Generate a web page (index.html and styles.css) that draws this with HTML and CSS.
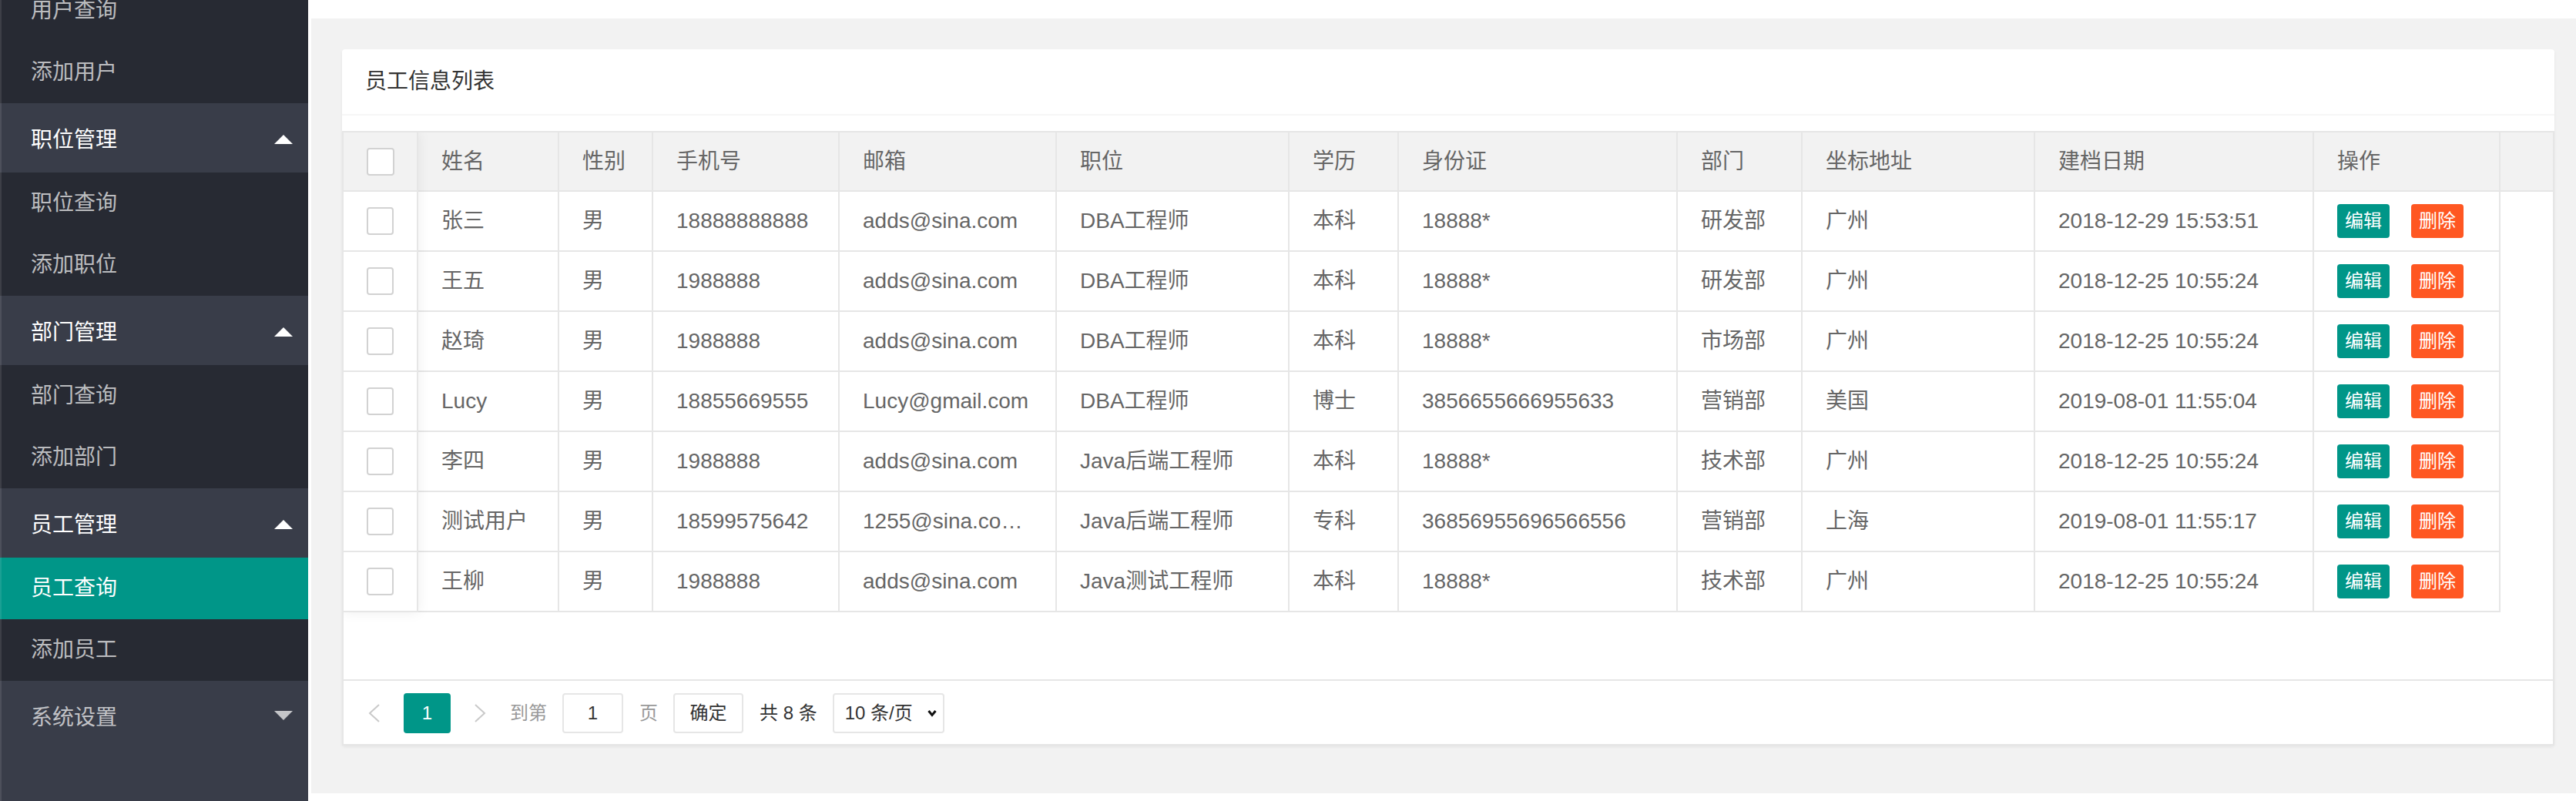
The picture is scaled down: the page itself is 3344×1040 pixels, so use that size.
FILE: index.html
```html
<!DOCTYPE html>
<html lang="zh-CN">
<head>
<meta charset="utf-8">
<title>员工信息列表</title>
<link rel="stylesheet" href="styles.css">
</head>
<body>
<div class="app">
  <aside class="side">
    <ul class="nav">
      <li class="nav-grp nav-open">
        <dl class="sub">
          <dd class="sub-item">用户查询</dd>
          <dd class="sub-item">添加用户</dd>
        </dl>
      </li>
      <li class="nav-grp nav-open">
        <div class="nav-hd">职位管理<span class="more more-up"></span></div>
        <dl class="sub">
          <dd class="sub-item">职位查询</dd>
          <dd class="sub-item">添加职位</dd>
        </dl>
      </li>
      <li class="nav-grp nav-open">
        <div class="nav-hd">部门管理<span class="more more-up"></span></div>
        <dl class="sub">
          <dd class="sub-item">部门查询</dd>
          <dd class="sub-item">添加部门</dd>
        </dl>
      </li>
      <li class="nav-grp nav-open">
        <div class="nav-hd">员工管理<span class="more more-up"></span></div>
        <dl class="sub">
          <dd class="sub-item active">员工查询</dd>
          <dd class="sub-item">添加员工</dd>
        </dl>
      </li>
      <li class="nav-grp">
        <div class="nav-hd">系统设置<span class="more more-down"></span></div>
      </li>
    </ul>
  </aside>

  <main class="main">
    <div class="stage">
      <div class="card">
        <div class="card-hd">员工信息列表</div>
        <div class="card-bd">
          <div class="tv">
            <div class="tbox">
              <div class="thead">
                <div class="th th-cb"><span class="cb"></span></div>
                <div class="th">姓名</div>
                <div class="th">性别</div>
                <div class="th">手机号</div>
                <div class="th">邮箱</div>
                <div class="th">职位</div>
                <div class="th">学历</div>
                <div class="th">身份证</div>
                <div class="th">部门</div>
                <div class="th">坐标地址</div>
                <div class="th">建档日期</div>
                <div class="th">操作</div>
                <div class="th patch"></div>
              </div>
              <div class="tbody">
                <div class="tr">
                  <div class="td td-cb"><span class="cb"></span></div>
                  <div class="td">张三</div><div class="td">男</div><div class="td">18888888888</div><div class="td">adds@sina.com</div><div class="td">DBA工程师</div><div class="td">本科</div><div class="td">18888*</div><div class="td">研发部</div><div class="td">广州</div><div class="td">2018-12-29 15:53:51</div>
                  <div class="td ops"><span class="btn btn-edit">编辑</span><span class="btn btn-del">删除</span></div>
                </div>
                <div class="tr">
                  <div class="td td-cb"><span class="cb"></span></div>
                  <div class="td">王五</div><div class="td">男</div><div class="td">1988888</div><div class="td">adds@sina.com</div><div class="td">DBA工程师</div><div class="td">本科</div><div class="td">18888*</div><div class="td">研发部</div><div class="td">广州</div><div class="td">2018-12-25 10:55:24</div>
                  <div class="td ops"><span class="btn btn-edit">编辑</span><span class="btn btn-del">删除</span></div>
                </div>
                <div class="tr">
                  <div class="td td-cb"><span class="cb"></span></div>
                  <div class="td">赵琦</div><div class="td">男</div><div class="td">1988888</div><div class="td">adds@sina.com</div><div class="td">DBA工程师</div><div class="td">本科</div><div class="td">18888*</div><div class="td">市场部</div><div class="td">广州</div><div class="td">2018-12-25 10:55:24</div>
                  <div class="td ops"><span class="btn btn-edit">编辑</span><span class="btn btn-del">删除</span></div>
                </div>
                <div class="tr">
                  <div class="td td-cb"><span class="cb"></span></div>
                  <div class="td">Lucy</div><div class="td">男</div><div class="td">18855669555</div><div class="td">Lucy@gmail.com</div><div class="td">DBA工程师</div><div class="td">博士</div><div class="td">3856655666955633</div><div class="td">营销部</div><div class="td">美国</div><div class="td">2019-08-01 11:55:04</div>
                  <div class="td ops"><span class="btn btn-edit">编辑</span><span class="btn btn-del">删除</span></div>
                </div>
                <div class="tr">
                  <div class="td td-cb"><span class="cb"></span></div>
                  <div class="td">李四</div><div class="td">男</div><div class="td">1988888</div><div class="td">adds@sina.com</div><div class="td">Java后端工程师</div><div class="td">本科</div><div class="td">18888*</div><div class="td">技术部</div><div class="td">广州</div><div class="td">2018-12-25 10:55:24</div>
                  <div class="td ops"><span class="btn btn-edit">编辑</span><span class="btn btn-del">删除</span></div>
                </div>
                <div class="tr">
                  <div class="td td-cb"><span class="cb"></span></div>
                  <div class="td">测试用户</div><div class="td">男</div><div class="td">18599575642</div><div class="td">1255@sina.co…</div><div class="td">Java后端工程师</div><div class="td">专科</div><div class="td">36856955696566556</div><div class="td">营销部</div><div class="td">上海</div><div class="td">2019-08-01 11:55:17</div>
                  <div class="td ops"><span class="btn btn-edit">编辑</span><span class="btn btn-del">删除</span></div>
                </div>
                <div class="tr">
                  <div class="td td-cb"><span class="cb"></span></div>
                  <div class="td">王柳</div><div class="td">男</div><div class="td">1988888</div><div class="td">adds@sina.com</div><div class="td">Java测试工程师</div><div class="td">本科</div><div class="td">18888*</div><div class="td">技术部</div><div class="td">广州</div><div class="td">2018-12-25 10:55:24</div>
                  <div class="td ops"><span class="btn btn-edit">编辑</span><span class="btn btn-del">删除</span></div>
                </div>
              </div>
              <div class="fixed-sh"></div>
            </div>
            <div class="tpage">
              <span class="pg-arrow"><svg width="16" height="24" viewBox="0 0 16 24"><polyline points="14,1 2,12 14,23" fill="none" stroke="#c9c9c9" stroke-width="2"/></svg></span>
              <span class="pg-cur">1</span>
              <span class="pg-arrow pg-next"><svg width="16" height="24" viewBox="0 0 16 24"><polyline points="2,1 14,12 2,23" fill="none" stroke="#c9c9c9" stroke-width="2"/></svg></span>
              <span class="pg-txt pg-skip">到第</span>
              <span class="pg-input">1</span>
              <span class="pg-txt pg-unit">页</span>
              <span class="pg-btn">确定</span>
              <span class="pg-count">共 8 条</span>
              <span class="pg-limit">10 条/页<svg width="12" height="10" viewBox="0 0 12 10"><polyline points="1.5,2 6,7.5 10.5,2" fill="none" stroke="#111" stroke-width="3"/></svg></span>
            </div>
          </div>
        </div>
      </div>
    </div>
  </main>
</div>
</body>
</html>
```

FILE: styles.css
```css
* { box-sizing: border-box; }
html, body { margin: 0; padding: 0; }
body {
  width: 3344px;
  height: 1040px;
  overflow: hidden;
  background: #fff;
  font-family: "Liberation Sans", "Noto Sans CJK SC", sans-serif;
}
.app { display: flex; height: 1040px; }

/* sidebar */
.side {
  width: 400px;
  flex: none;
  background: #393d49;
  position: relative;
  overflow: hidden;
}
.side::after {
  content: "";
  position: absolute;
  left: 0; top: 0; bottom: 0;
  width: 2px;
  background: rgba(255,255,255,.1);
}
.nav { list-style: none; margin: -26px 0 0; padding: 0; }
.nav-hd {
  display: flex;
  align-items: center;
  height: 90px;
  padding: 0 20px 0 40px;
  font-size: 28px;
  color: rgba(255,255,255,.7);
}
.nav-open > .nav-hd { color: #fff; }
.more {
  margin-left: auto;
  width: 0; height: 0;
  border: 12px solid transparent;
}
.more-up { border-top-width: 0; border-bottom-color: #fff; margin-top: 4px; }
.more-down { border-bottom-width: 0; border-top-color: rgba(255,255,255,.7); }
.sub { margin: 0; padding: 0; background: rgba(0,0,0,.3); }
.sub-item {
  margin: 0;
  height: 80px;
  line-height: 80px;
  padding-left: 40px;
  font-size: 28px;
  color: rgba(255,255,255,.7);
}
.sub-item.active { background: #009688; color: #fff; }

/* main */
.main { flex: 1; padding: 24px 0 10px 4px; }
.stage { height: 100%; background: #f2f2f2; padding: 40px 28px 0 40px; }
.card { background: #fff; border-radius: 4px; box-shadow: 0 2px 4px rgba(0,0,0,.06); }
.card-hd {
  height: 86px;
  line-height: 84px;
  padding: 0 30px;
  border-bottom: 2px solid #f6f6f6;
  font-size: 28px;
  color: #333;
}
.card-bd { padding-top: 20px; }

.tv { border: 2px solid #e6e6e6; }
.tbox { position: relative; height: 710px; overflow: hidden; }
.thead {
  display: grid;
  grid-template-columns: 97px 183px 122px 242px 282px 302px 142px 362px 162px 302px 362px 242px 1fr;
  height: 77px;
  background: #f2f2f2;
  border-bottom: 2px solid #e6e6e6;
}
.th {
  border-right: 2px solid #e6e6e6;
  padding: 0 30px;
  line-height: 75px;
  font-size: 28px;
  color: #666;
  white-space: nowrap;
}
.th.patch { border-right: 0; }
.th-cb, .td-cb { padding: 0; display: flex; align-items: center; justify-content: center; }
.cb {
  display: block;
  width: 36px; height: 36px;
  border: 2px solid #d2d2d2;
  border-radius: 4px;
  background: #fff;
}
.tr {
  display: grid;
  grid-template-columns: 97px 183px 122px 242px 282px 302px 142px 362px 162px 302px 362px 242px;
}
.td {
  height: 78px;
  line-height: 76px;
  padding: 0 30px;
  border-right: 2px solid #e6e6e6;
  border-bottom: 2px solid #e6e6e6;
  font-size: 28px;
  color: #666;
  white-space: nowrap;
  overflow: hidden;
  text-overflow: ellipsis;
}
.td.ops { display: flex; align-items: center; gap: 28px; }
.btn {
  height: 44px;
  line-height: 44px;
  padding: 0 10px;
  font-size: 24px;
  color: #fff;
  border-radius: 4px;
}
.btn-edit { background: #009688; }
.btn-del { background: #ff5722; }
.fixed-sh {
  position: absolute;
  left: 0; top: 0;
  width: 97px;
  height: 623px;
  box-shadow: 0 0 16px rgba(0,0,0,.07);
  pointer-events: none;
}

/* pagination */
.tpage {
  height: 84px;
  border-top: 2px solid #e6e6e6;
  padding: 16px 0 0 16px;
  display: flex;
  align-items: flex-start;
  font-size: 24px;
  color: #333;
}
.tpage > span { height: 52px; line-height: 52px; flex: none; }
.pg-arrow { width: 48px; display: flex; align-items: center; justify-content: center; }
.pg-cur {
  width: 61px;
  margin: 0 14px;
  text-align: center;
  background: #009688;
  color: #fff;
  border-radius: 4px;
}
.pg-txt { color: #999; }
.pg-skip { margin-left: 15px; }
.pg-input, .pg-btn, .pg-limit {
  border: 2px solid #e6e6e6;
  border-radius: 4px;
  background: #fff;
  line-height: 48px !important;
}
.pg-input { width: 79px; margin-left: 20px; text-align: center; }
.pg-unit { margin-left: 21px; }
.pg-btn { width: 91px; margin-left: 20px; text-align: center; }
.pg-count { margin-left: 21px; }
.pg-limit {
  width: 145px;
  margin-left: 20px;
  padding: 0 8px 0 14px;
  display: flex;
  align-items: center;
  justify-content: space-between;
}
```
